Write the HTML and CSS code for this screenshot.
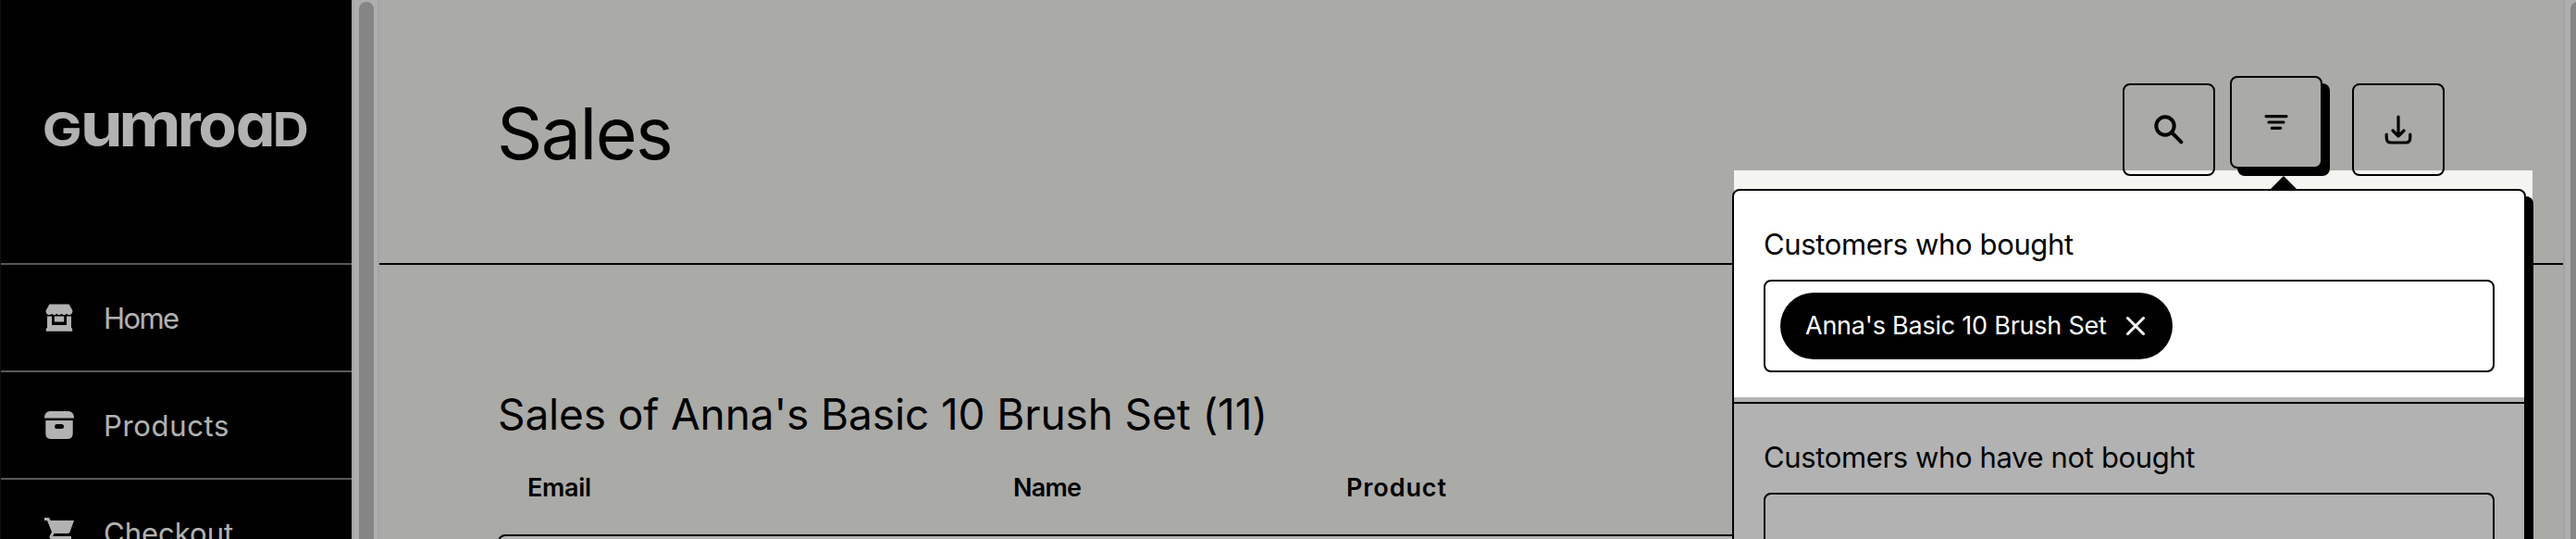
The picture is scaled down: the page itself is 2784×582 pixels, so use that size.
FILE: index.html
```html
<!DOCTYPE html>
<html lang="en">
<head>
<meta charset="utf-8">
<title>Sales</title>
<link rel="stylesheet" href="styles.css">
</head>
<body>
<div class="app">
  <nav class="sidebar">
    <div class="brand">
      <svg class="logo" width="380" height="284" viewBox="0 0 380 284" role="img" aria-label="Gumroad">
        <g class="wordmark">
          <text transform="scale(1.12 1)" y="158"><tspan class="cap" x="40.800">G</tspan><tspan x="77.500">u</tspan><tspan x="114.600">m</tspan></text>
          <text transform="scale(0.98 1)" y="158" x="196">r</text>
          <text transform="scale(1.03 1)" y="158"><tspan x="208">o</tspan><tspan x="247.300">ɑ</tspan></text>
          <text class="cap" transform="scale(1.06 1)" y="158" x="278">D</text>
        </g>
      </svg>
    </div>
    <a class="nav-item">
      <svg class="nav-icon" viewBox="0 0 32 32"><path d="M5.5 1.5h21L30.3 8c.6 2.8-1.3 5-3.3 5-1.500 0-2.500-.7-3-1.300-.8.9-1.800 1.300-2.700 1.300s-2-.4-2.700-1.300c-.8.9-1.700 1.300-2.600 1.300s-1.900-.4-2.600-1.300c-.8.9-1.800 1.300-2.700 1.300s-1.900-.4-2.700-1.300c-.5.6-1.500 1.300-3 1.300-2 0-3.900-2.200-3.300-5z"/><path d="M3 14.500h5V24h16v-9.500h5V27c1 .4 1.300 1 1.300 3.800H1.700C1.700 28 2 27.400 3 27z"/><path d="M10.800 14.500h10.400v6H10.800z"/></svg>
      <span>Home</span>
    </a>
    <a class="nav-item">
      <svg class="nav-icon" viewBox="0 0 32 32"><path d="M0 8.500C0 3.500 2.500 1 7 1h18c4.500 0 7 2.500 7 7.500z"/><path fill-rule="evenodd" d="M1.300 11h29.400v13.500c0 4.500-2 6.500-6.200 6.500h-17c-4.200 0-6.200-2-6.200-6.500zM13.500 15a2.500 2.500 0 0 0 0 5h5a2.500 2.500 0 0 0 0-5z"/></svg>
      <span class="wide">Products</span>
    </a>
    <a class="nav-item">
      <svg class="nav-icon" viewBox="0 0 32 32"><path d="M0 0h5l1.700 3H32L27.500 15.500q-.6 1.500-2.200 1.500H10.500L9 20h20v3H8c-2.500 0-3-2-2-4l2-3.500L3 3H0z"/><circle cx="9.500" cy="28" r="3"/><circle cx="25" cy="28" r="3"/></svg>
      <span class="natural">Checkout</span>
    </a>
  </nav>
  <div class="scrollbar left"><div class="thumb"></div></div>
  <main class="main">
    <header class="header">
      <h1>Sales</h1>
      <div class="actions">
        <button class="button"><svg viewBox="0 0 32 32" fill="none" stroke="#000" stroke-width="4"><circle cx="12" cy="12" r="9.700"/><path stroke-linecap="round" d="M19.500 19.500 29.300 29.300"/></svg></button>
        <button class="button open"><svg viewBox="0 0 32 32" fill="none" stroke="#000" stroke-width="3.200" stroke-linecap="round"><path d="M5 9.600h22M8 16h16M11.300 22.400h9.400"/></svg></button>
        <button class="button"><svg viewBox="0 0 32 32" fill="none" stroke="#000" stroke-width="3.200" stroke-linecap="round" stroke-linejoin="round"><path d="M16 2v21M10 17l6 6 6-6"/><path d="M3.200 21v3.500c0 3.500 1.500 5.500 5 5.500h15.600c3.500 0 5-2 5-5.500V21"/></svg></button>
      </div>
    </header>
    <section class="content">
      <h2>Sales of Anna's Basic 10 Brush Set (11)</h2>
      <div class="columns"><span class="c-email">Email</span><span class="c-name">Name</span><span class="c-product">Product</span></div>
      <div class="table"></div>
    </section>
  </main>
  <div class="scrollbar right"><div class="thumb"></div></div>
</div>
<div class="popover">
  <div class="arrow"></div>
  <div class="group">
    <label>Customers who bought</label>
    <div class="input"><span class="pill">Anna's Basic 10 Brush Set<svg viewBox="0 0 20 20"><path d="M1.500 1.500l17 17M18.500 1.500l-17 17"/></svg></span></div>
  </div>
  <div class="group">
    <label>Customers who have not bought</label>
    <div class="input"></div>
  </div>
</div>
<div class="spotlight"></div>
</body>
</html>
```
FILE: styles.css
```css
* { box-sizing: border-box; }

html { overflow: hidden; }

body {
  margin: 0;
  position: relative;
  width: 2784px;
  height: 582px;
  overflow: hidden;
  background: #f4f4f0;
  color: #000;
  font-family: Inter, sans-serif;
  font-size: 31px;
}

.app { display: flex; height: 582px; overflow: hidden; }

/* Sidebar */
.sidebar {
  width: 380px;
  flex: none;
  overflow: hidden;
  background: #000;
  color: #fff;
  border-left: 1px solid #161616;
}
.brand { height: 284px; margin-left: -1px; }
.logo { display: block; }
.wordmark { font-size: 66px; font-weight: 700; fill: #fff; }
.wordmark .cap { font-size: 51px; }
.nav-item {
  display: flex;
  align-items: center;
  gap: 32px;
  height: 116px;
  padding-left: 47px;
  border-top: 2px solid #808080;
  line-height: 48px;
  letter-spacing: -1.59px;
}
.nav-item span { padding-top: 1px; }
.nav-item .wide { letter-spacing: 0.66px; }
.nav-item .natural { letter-spacing: 0; }
.nav-icon { width: 32px; height: 32px; fill: #fff; flex: none; }

/* Scrollbars */
.scrollbar { flex: none; background: #fafafa; overflow: hidden; }
.scrollbar .thumb { background: #bfbfbf; height: 620px; }
.left {
  width: 30px;
  padding: 2px 4px 0 6px;
  border: solid #ececec;
  border-width: 0 2px;
}
.left .thumb { width: 16px; border-radius: 8px; }
.right { width: 14px; padding: 2px 0 0 6px; border-left: 2px solid #e8e8e6; }
.right .thumb { width: 16px; border-radius: 8px; }

/* Main column */
.main { flex: 1; min-width: 0; }
.header {
  display: flex;
  justify-content: space-between;
  align-items: flex-start;
  height: 286px;
  padding: 90px 128px 0 127px;
  border-bottom: 2px solid #000;
}
h1 {
  margin: 0;
  padding-top: 6px;
  font-size: 77px;
  font-weight: 400;
  line-height: 96px;
  letter-spacing: -1.55px;
}
.actions { display: flex; gap: 24px; }
.button {
  display: flex;
  align-items: center;
  justify-content: center;
  width: 100px;
  height: 100px;
  padding: 0;
  border: 2px solid #000;
  border-radius: 8px;
  background: #f4f4f0;
}
.button svg { width: 32px; height: 32px; }
.button.open { transform: translate(-8px, -8px); box-shadow: 8px 8px 0 #000; }

.content { padding: 133px 128px 0; }
h2 {
  margin: 0 0 32px;
  font-size: 46px;
  font-weight: 400;
  line-height: 56px;
  letter-spacing: -0.12px;
}
.columns {
  display: grid;
  grid-template-columns: 525px 360px 1fr;
  height: 70px;
  padding-left: 32px;
  font-size: 27px;
  font-weight: 600;
  line-height: 40px;
}
.c-email { letter-spacing: -0.31px; }
.c-name { letter-spacing: -0.77px; }
.c-product { letter-spacing: 0.9px; }
.table {
  height: 120px;
  border: 2px solid #000;
  border-radius: 8px;
  background: #fff;
}

/* Filter popover */
.popover {
  position: absolute;
  left: 1872px;
  top: 204px;
  width: 858px;
  height: 500px;
  border: 2px solid #000;
  border-radius: 8px;
  background: #fff;
  box-shadow: 8px 8px 0 #000;
}
.arrow {
  position: absolute;
  left: 580px;
  top: -16px;
  width: 28px;
  height: 14px;
  background: #000;
  clip-path: polygon(50% 0, 100% 100%, 0 100%);
}
.group { padding: 32px; }
.group + .group { border-top: 2px solid #000; }
label {
  display: block;
  height: 48px;
  margin-bottom: 16px;
  padding-top: 2px;
  line-height: 48px;
  letter-spacing: -0.37px;
}
.input {
  display: flex;
  align-items: center;
  height: 100px;
  padding-left: 16px;
  border: 2px solid #000;
  border-radius: 8px;
}
.pill {
  display: flex;
  align-items: center;
  gap: 21px;
  width: 424px;
  height: 72px;
  padding-left: 27px;
  border-radius: 36px;
  background: #000;
  color: #fff;
  font-size: 27px;
  line-height: 42px;
  letter-spacing: -0.23px;
  white-space: nowrap;
}
.pill svg {
  width: 20px;
  height: 20px;
  fill: none;
  stroke: #fff;
  stroke-width: 3;
  stroke-linecap: round;
}

/* Dims everything outside the highlighted area */
.spotlight {
  position: absolute;
  left: 1874px;
  top: 184px;
  width: 863px;
  height: 245px;
  box-shadow: 0 0 0 3000px rgba(0, 0, 0, 0.3);
  pointer-events: none;
}
```
